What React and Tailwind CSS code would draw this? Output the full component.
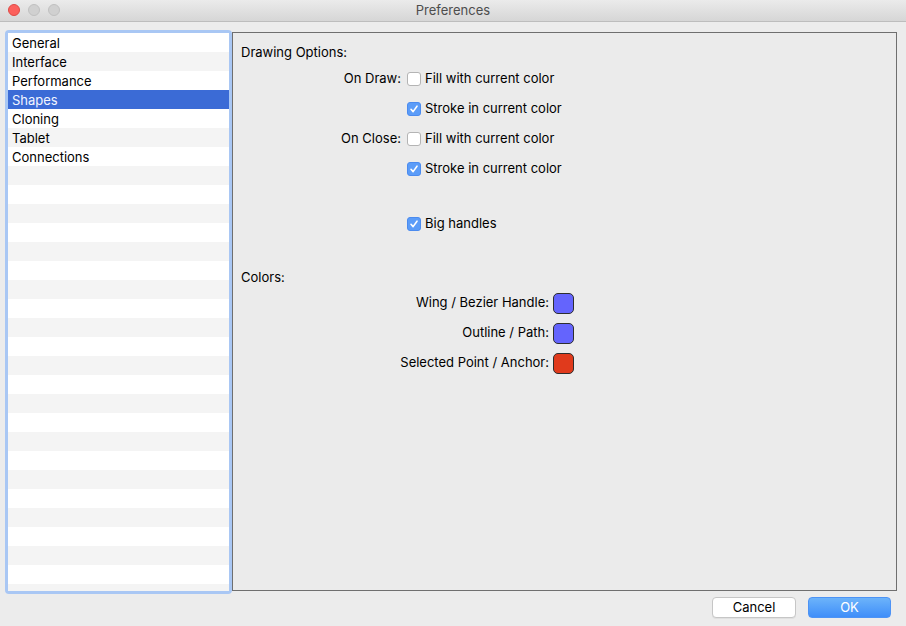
import React from "react";

const categories = ["General", "Interface", "Performance", "Shapes", "Cloning", "Tablet", "Connections"];

function Checkbox({ checked }) {
  if (checked) {
    return (
      <span className="w-[14px] h-[14px] rounded-[3px] bg-[#5b9cf8] border border-[#4b8bef] flex items-center justify-center shrink-0">
        <svg width="10" height="10" viewBox="0 0 10 10">
          <path d="M2 5.3 L4.1 7.6 L8 2.2" fill="none" stroke="white" strokeWidth="1.6" strokeLinecap="round" strokeLinejoin="round" />
        </svg>
      </span>
    );
  }
  return <span className="w-[14px] h-[14px] rounded-[3px] bg-white border border-[#b4b4b4] shrink-0" />;
}

function OptionRow({ label, text, checked }) {
  return (
    <div className="h-[30px] flex items-center">
      <div className="w-[168px] text-right">{label}</div>
      <div className="ml-[6px] flex items-center gap-[4px]">
        <Checkbox checked={checked} />
        <span>{text}</span>
      </div>
    </div>
  );
}

function ColorRow({ label, color }) {
  return (
    <div className="h-[30px] flex items-center">
      <div className="w-[316px] text-right">{label}</div>
      <span className={`ml-[4px] w-[21px] h-[21px] rounded-[5px] border border-[#2e2e2e] ${color}`} />
    </div>
  );
}

export default function App() {
  return (
    <div
      className="w-[906px] h-[626px] bg-[#ececec] flex flex-col text-[13px] text-black overflow-hidden"
      style={{ fontFamily: 'Inter, "Liberation Sans", Arial, sans-serif' }}
    >
      <div className="h-[22px] shrink-0 relative flex items-center justify-center pt-[1px] bg-gradient-to-b from-[#ebebeb] to-[#d6d6d6] border-b border-[#bdbdbd]">
        <div className="absolute left-[8px] top-[4px] flex gap-[8px]">
          <span className="w-[12px] h-[12px] rounded-full bg-[#fc605c] border border-[#de4a45]" />
          <span className="w-[12px] h-[12px] rounded-full bg-[#d0d0d0] border border-[#c0c0c0]" />
          <span className="w-[12px] h-[12px] rounded-full bg-[#d0d0d0] border border-[#c0c0c0]" />
        </div>
        <span className="text-[#4d4d4d]">Preferences</span>
      </div>

      <div className="flex pl-[5px] pt-[8px]">
        <div className="w-[227px] h-[564px] rounded-[4px] bg-[#a9c7f4] p-[3px]">
          <div className="w-full h-full bg-white overflow-hidden">
            {Array.from({ length: 30 }).map((_, i) => {
              const selected = i === 3;
              const bg = selected ? "bg-[#3b6bd6] text-[#f2f5ff]" : i % 2 === 1 ? "bg-[#f4f4f4]" : "bg-white";
              return (
                <div key={i} className={`h-[19px] leading-[19px] pl-[4px] pt-[1px] ${bg}`}>
                  {categories[i] || ""}
                </div>
              );
            })}
          </div>
        </div>

        <div className="mt-[2px] w-[665px] h-[559px] border border-[#6f6f6f] bg-[#ebebeb] pl-[8px] pt-[11px]">
          <div className="leading-[16px]">Drawing Options:</div>
          <div className="mt-[4px] -ml-[8px]">
            <OptionRow label="On Draw:" text="Fill with current color" checked={false} />
            <OptionRow label="" text="Stroke in current color" checked />
            <OptionRow label="On Close:" text="Fill with current color" checked={false} />
            <OptionRow label="" text="Stroke in current color" checked />
            <div className="mt-[25px]">
              <OptionRow label="" text="Big handles" checked />
            </div>
          </div>
          <div className="mt-[30px] leading-[16px]">Colors:</div>
          <div className="mt-[3px] -ml-[8px]">
            <ColorRow label="Wing / Bezier Handle:" color="bg-[#6464fd]" />
            <ColorRow label="Outline / Path:" color="bg-[#6464fd]" />
            <ColorRow label="Selected Point / Anchor:" color="bg-[#e03a1c]" />
          </div>
        </div>
      </div>

      <div className="flex justify-end pr-[15px] mt-[3px] gap-[12px]">
        <button className="w-[84px] h-[21px] rounded-[4px] bg-white border border-[#c6c6c6] shadow-[0_1px_0_rgba(0,0,0,0.05)]">
          Cancel
        </button>
        <button className="w-[83px] h-[21px] rounded-[4px] bg-gradient-to-b from-[#6cb3fa] to-[#3f8ef9] border border-[#4d93f5] text-white">
          OK
        </button>
      </div>
    </div>
  );
}
